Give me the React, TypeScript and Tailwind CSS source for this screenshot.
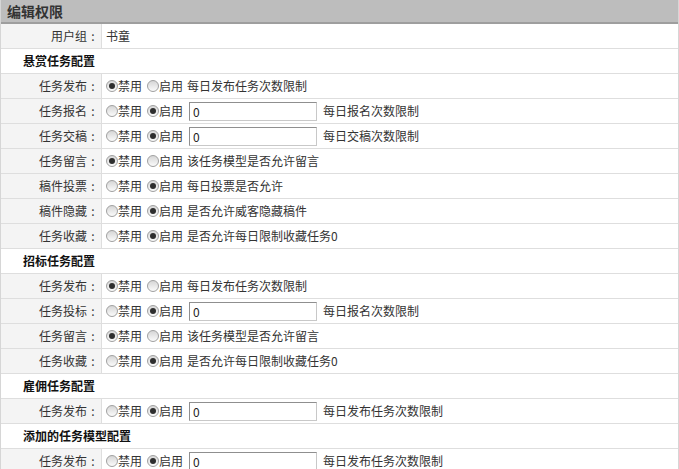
import React from "react";

type Opt = {
  label: string;
  enabled: boolean;
  input?: boolean;
  note: string;
};

type Section = { title: string; rows: Opt[] };

const sections: Section[] = [
  {
    title: "悬赏任务配置",
    rows: [
      { label: "任务发布", enabled: false, note: "每日发布任务次数限制" },
      { label: "任务报名", enabled: true, input: true, note: "每日报名次数限制" },
      { label: "任务交稿", enabled: true, input: true, note: "每日交稿次数限制" },
      { label: "任务留言", enabled: false, note: "该任务模型是否允许留言" },
      { label: "稿件投票", enabled: true, note: "每日投票是否允许" },
      { label: "稿件隐藏", enabled: true, note: "是否允许威客隐藏稿件" },
      { label: "任务收藏", enabled: true, note: "是否允许每日限制收藏任务0" },
    ],
  },
  {
    title: "招标任务配置",
    rows: [
      { label: "任务发布", enabled: false, note: "每日发布任务次数限制" },
      { label: "任务投标", enabled: true, input: true, note: "每日报名次数限制" },
      { label: "任务留言", enabled: false, note: "该任务模型是否允许留言" },
      { label: "任务收藏", enabled: true, note: "是否允许每日限制收藏任务0" },
    ],
  },
  {
    title: "雇佣任务配置",
    rows: [{ label: "任务发布", enabled: true, input: true, note: "每日发布任务次数限制" }],
  },
  {
    title: "添加的任务模型配置",
    rows: [{ label: "任务发布", enabled: true, input: true, note: "每日发布任务次数限制" }],
  },
];

function Radio({ checked }: { checked: boolean }) {
  return (
    <span className="relative inline-flex h-[12px] w-[12px] shrink-0 items-center justify-center rounded-full border border-[#a0a0a0] bg-gradient-to-b from-[#d6d6d6] to-[#fbfbfb]">
      {checked && <span className="h-[6px] w-[6px] rounded-full bg-[#2e2e2e]" />}
    </span>
  );
}

function Row({ label, children }: { label: string; children: React.ReactNode }) {
  return (
    <div className="flex h-[25px] border-b border-[#dedede]">
      <div className="flex w-[101px] shrink-0 items-center justify-end border-r border-[#dedede] bg-[#f4f4f4] pr-[2px]">
        <span>{label}</span>
        <span className="w-[12px] text-center">:</span>
      </div>
      <div className="flex flex-1 items-center pl-[4px]">{children}</div>
    </div>
  );
}

function OptionRow({ opt }: { opt: Opt }) {
  return (
    <Row label={opt.label}>
      <label className="flex items-center">
        <Radio checked={!opt.enabled} />
        <span>禁用</span>
      </label>
      <label className="ml-[5px] flex items-center">
        <Radio checked={opt.enabled} />
        <span>启用</span>
      </label>
      {opt.input ? (
        <>
          <input
            readOnly
            value="0"
            className="ml-[6px] h-[19px] w-[128px] border border-t-[#8f8f8f] border-l-[#8f8f8f] border-r-[#c8c8c8] border-b-[#c8c8c8] bg-white px-[3px] text-[12px] leading-none text-[#222] outline-none"
          />
          <span className="ml-[6px]">{opt.note}</span>
        </>
      ) : (
        <span className="ml-[4px]">{opt.note}</span>
      )}
    </Row>
  );
}

export default function App() {
  return (
    <div
      className="w-[679px] bg-white text-[12px] text-[#333]"
      style={{ fontFamily: '"Noto Sans CJK SC", "Liberation Sans", sans-serif' }}
    >
      <div className="border-l border-r border-[#d6d6d6]">
        <div className="flex h-[22px] items-center bg-[#bdbdbd] pl-[6px] text-[14px] font-bold text-[#333]">
          编辑权限
        </div>
        <div className="h-[2px] bg-[#9e9e9e]" />
        <Row label="用户组">
          <span>书童</span>
        </Row>
        {sections.map((s) => (
          <React.Fragment key={s.title}>
            <div className="flex h-[25px] items-center border-b border-[#dedede] pl-[22px] font-bold text-[#111]">
              {s.title}
            </div>
            {s.rows.map((r, i) => (
              <OptionRow key={i} opt={r} />
            ))}
          </React.Fragment>
        ))}
      </div>
    </div>
  );
}
